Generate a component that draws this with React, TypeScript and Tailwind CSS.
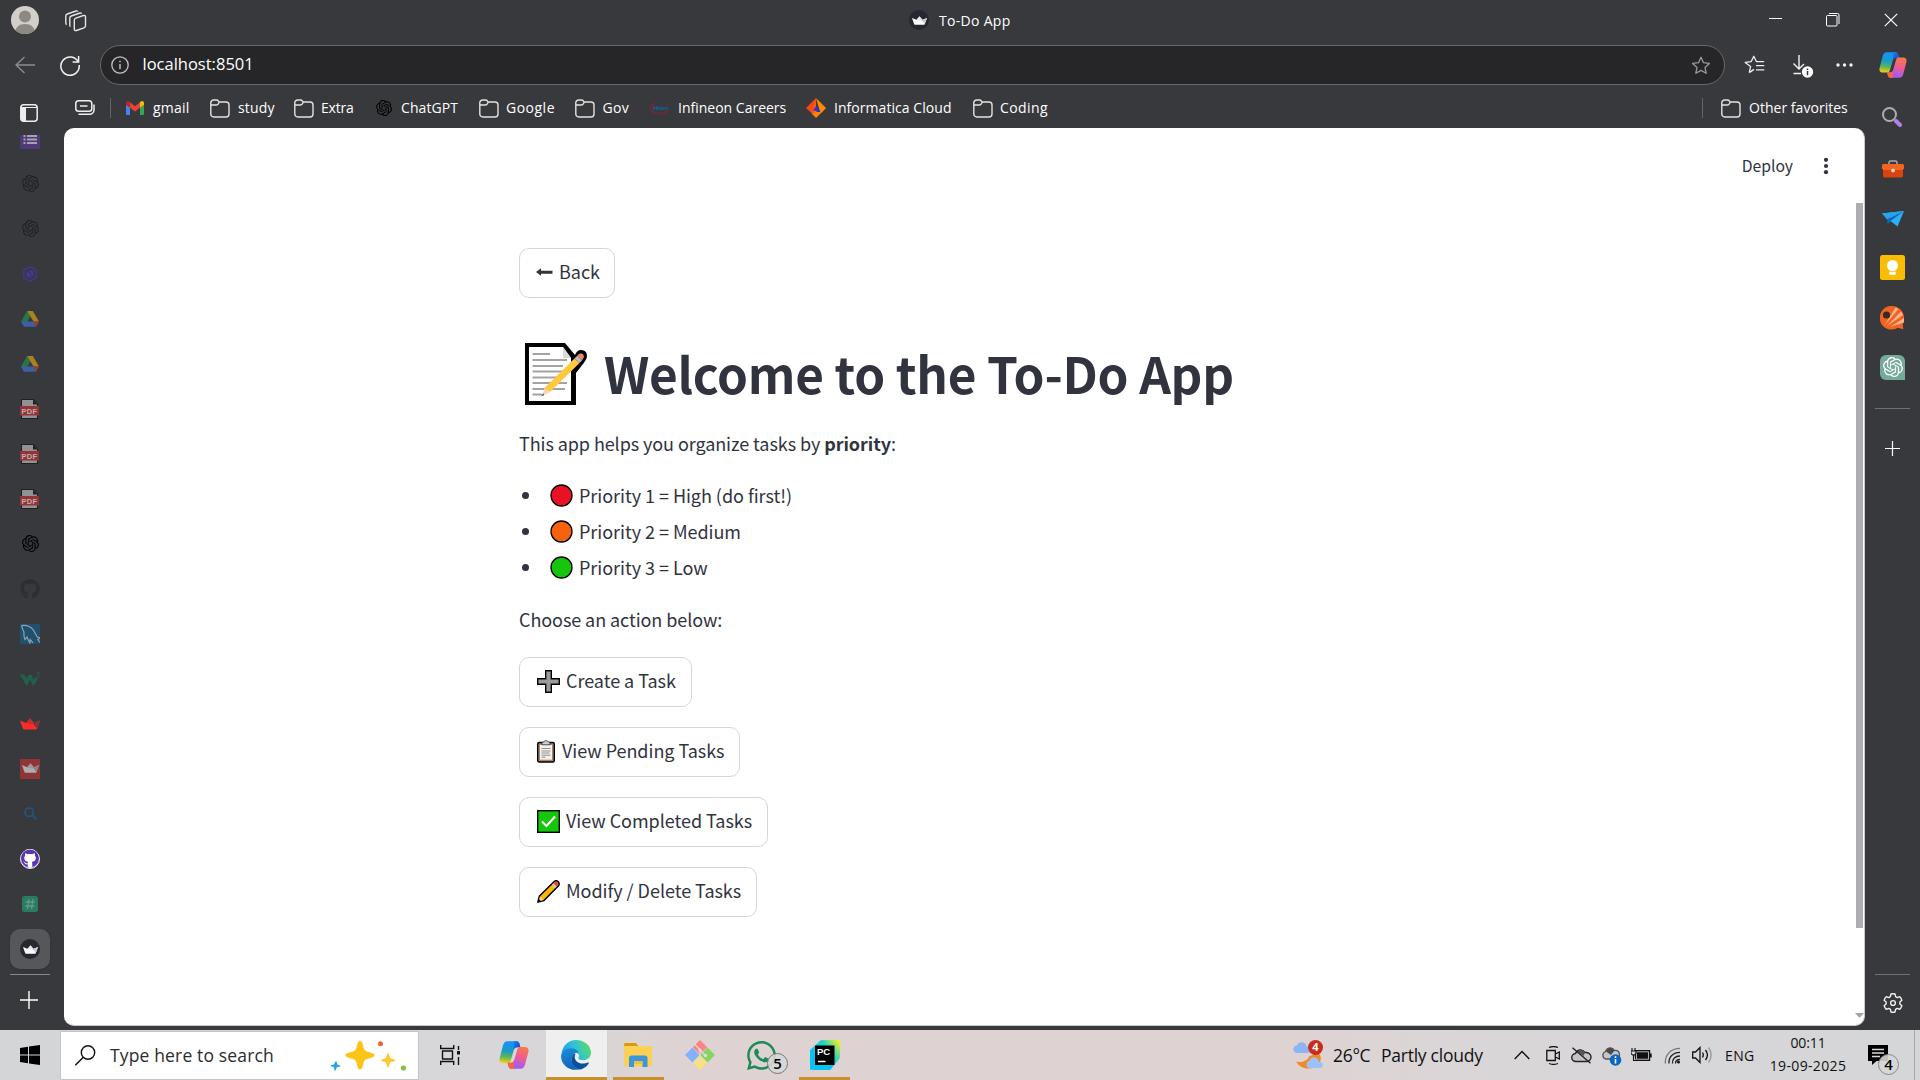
import type { ReactNode } from "react";
import { SiOpenai } from "react-icons/si";
import { FaGithub, FaWhatsapp } from "react-icons/fa";

type SvgProps = { w: number; h: number; vb?: string; className?: string; children: ReactNode };

function Svg({ w, h, vb, className = "", children }: SvgProps) {
  return (
    <svg width={w} height={h} viewBox={vb ?? `0 0 ${w} ${h}`} fill="none" className={`shrink-0 ${className}`}>
      {children}
    </svg>
  );
}

/* ---------- shared glyphs ---------- */

function Folder() {
  return (
    <Svg w={20} h={19}>
      <path d="M.8 4.5A3 3 0 0 1 3.8 1H6.500c1 0 1.500.5 2 1.200L9.300 3H16a3 3 0 0 1 3 3v9a3 3 0 0 1-3 3H3.800a3 3 0 0 1-3-3Z" stroke="#e2e2e2" strokeWidth="1.4" />
      <path d="M.8 6h5.700c1 0 1.500-.5 2-1.300L9.300 3" stroke="#e2e2e2" strokeWidth="1.3" />
    </Svg>
  );
}

function Crown({ size, shade = "#c9c9cf", light = "#ffffff" }: { size: number; shade?: string; light?: string }) {
  return (
    <Svg w={size} h={size * 0.6} vb="0 0 20 12">
      <path d="M0 2.500 6 5 10 .2 14 5l6-2.500-2.700 7.800c-.2.700-.6 1.200-1.400 1.200H4.100c-.8 0-1.200-.5-1.400-1.200Z" fill={light} />
      <path d="m13 5.500 7-3-3 8.200Z" fill={shade} />
      <path d="M6 5.200 10 .2l4 5-1 1.300Z" fill={shade} opacity=".45" />
    </Svg>
  );
}

function CrownBadge() {
  return (
    <span className="flex size-5 items-center justify-center rounded-full bg-[#262730]">
      <Crown size={15} />
    </span>
  );
}

function Copilot({ size, id }: { size: number; id: string }) {
  const d = "M14 2h14c3 0 4.200 2 5 5l1.200 4.500H29c-3 0-4.500 1.500-5.300 4.500l-5 17c-1 3-2 4-5 4H7c-5.500 0-7-4-6-8l5-19c1.200-5 3-8 8-8Z";
  return (
    <Svg w={size} h={size} vb="0 0 48 48">
      <defs>
        <linearGradient id={`${id}a`} x1="0" y1="0" x2="-.1" y2="1">
          <stop offset=".1" stopColor="#1793f0" />
          <stop offset=".4" stopColor="#1a9cc6" />
          <stop offset=".68" stopColor="#5bb659" />
          <stop offset=".95" stopColor="#f6cf10" />
        </linearGradient>
        <linearGradient id={`${id}b`} x1=".5" y1="0" x2=".2" y2="1">
          <stop offset=".1" stopColor="#a75af0" />
          <stop offset=".5" stopColor="#ee5c92" />
          <stop offset="1" stopColor="#fb7a45" />
        </linearGradient>
        <linearGradient id={`${id}c`} x1="0" y1="0" x2="1" y2="1">
          <stop stopColor="#1e86ea" />
          <stop offset="1" stopColor="#1740c4" />
        </linearGradient>
      </defs>
      <path d={d} fill={`url(#${id}a)`} />
      <path d="M22 2h6c3 0 4.200 2 5 5l1.200 4.500H29c-3 0-4.500 1.500-5.300 4.500C24 10 26 3 22 2Z" fill={`url(#${id}c)`} />
      <path d={d} transform="rotate(180 24 24)" fill={`url(#${id}b)`} />
      <path d="M26 46h-6c-3 0-4.200-2-5-5l-1.200-4.500H19c3 0 4.500-1.500 5.300-4.500C24 38 22 45 26 46Z" fill="#f8663c" />
    </Svg>
  );
}

/* ---------- window chrome ---------- */

function TitleBar() {
  return (
    <div className="flex h-10 shrink-0 items-center">
      <span className="ml-[11px] flex size-7 justify-center overflow-hidden rounded-full bg-[#d2cfcb]">
        <Svg w={28} h={28}>
          <circle cx="14" cy="10.500" r="6" fill="#8d8884" />
          <path d="M4 28c0-7 4-10 10-10s10 3 10 10Z" fill="#8d8884" />
        </Svg>
      </span>
      <Svg w={22} h={22} className="ml-[26px] mt-px">
        <g stroke="#e4e4e4" strokeWidth="1.400" strokeLinejoin="round">
          <path d="M9.300 10.200c0-1 .6-1.700 1.500-2l7.600-2.700c1.200-.4 2.100.2 2.100 1.500v8.800c0 1-.6 1.700-1.500 2l-7.600 2.700c-1.200.4-2.100-.2-2.100-1.500Z" />
          <path d="M5.500 16.500c-.6-.2-.7-.8-.7-1.500V8c0-1 .6-1.700 1.500-2L15 3c.7-.2 1.200 0 1.700.6" />
          <path d="M1.700 14.500c-.6-.2-.9-.8-.9-1.500V6c0-1 .6-1.700 1.500-2L11 1c.7-.2 1.400 0 1.800.6" />
        </g>
      </Svg>
      <span className="ml-[822px]"><CrownBadge /></span>
      <span className="ml-[10px] w-[830px] text-[14px] tracking-[0.3px] text-white">To-Do App</span>
      <Svg w={14} h={14}>
        <path d="M0 5.500h13" stroke="#fff" />
      </Svg>
      <Svg w={14} h={14} className="ml-[43px]">
        <rect x=".5" y="2.500" width="10.500" height="10.500" rx="1" stroke="#fff" />
        <path d="M3 .5h8.500a1.500 1.500 0 0 1 1.500 1.500v9" stroke="#fff" />
      </Svg>
      <Svg w={14} h={14} className="ml-[44px]">
        <path d="m.8.8 12.400 12.400M13.200.8.8 13.200" stroke="#fff" strokeWidth="1.200" />
      </Svg>
    </div>
  );
}

function AddressRow() {
  return (
    <div className="flex h-[50px] shrink-0 items-center">
      <Svg w={20} h={18} className="ml-[15px]">
        <path d="M20 9H1M9.500 1 1 9l8.500 8" stroke="#8b8c8e" strokeWidth="1.400" />
      </Svg>
      <Svg w={22} h={22} className="ml-6">
        <path d="M19.300 8A9.200 9.200 0 1 0 20.200 11" stroke="#f1f1f1" strokeWidth="1.500" />
        <path d="M19.600 2v6h-6" stroke="#f1f1f1" strokeWidth="1.500" />
      </Svg>
      <div className="ml-[19px] flex h-10 w-[1625px] items-center rounded-full border border-[#68686a] bg-[#262628]">
        <Svg w={18} h={18} className="ml-[10px]">
          <circle cx="9" cy="9" r="8.200" stroke="#c4c4c4" strokeWidth="1.300" />
          <path d="M9 8v5M9 4.800v1.500" stroke="#c4c4c4" strokeWidth="1.400" />
        </Svg>
        <span className="ml-[13.5px] pb-px text-[16.5px] text-white">localhost:8501</span>
        <Svg w={20} h={19} className="ml-auto mr-[13px]">
          <path d="m10 1.300 2.500 5.400 5.900.7-4.400 4 1.200 5.900L10 14.400l-5.200 2.900L6 11.400l-4.400-4 5.900-.7Z" stroke="#9a9a9b" strokeWidth="1.300" strokeLinejoin="round" />
        </Svg>
      </div>
      <Svg w={22} h={20} className="ml-[19px]">
        <path d="M5.300 17.600 6.600 11.400 1.200 7.400l5.900-.7L9.800 1.300l2.700 5.400h7.700M10 14.400 5.300 17.600M12 10.700h8.300M12 14.800h8.300" stroke="#eee" strokeWidth="1.300" strokeLinejoin="round" />
      </Svg>
      <Svg w={22} h={25} className="ml-[26px] mt-[3px]">
        <path d="M7 1v14M1.500 9.500 7 15l5-5M1.500 19.500H9" stroke="#f3f3f3" strokeWidth="1.400" />
        <circle cx="15.500" cy="18" r="5.700" fill="#fff" />
        <path d="M15.500 17v4.200M15.500 14.500v1.500" stroke="#38393c" strokeWidth="1.500" />
      </Svg>
      <Svg w={18} h={4} className="ml-[22px]">
        <g fill="#f1f1f1">
          <circle cx="2" cy="2" r="1.700" />
          <circle cx="8.500" cy="2" r="1.700" />
          <circle cx="15" cy="2" r="1.700" />
        </g>
      </Svg>
      <span className="ml-[25px]"><Copilot size={28} id="ct" /></span>
    </div>
  );
}

function Bookmark({ icon, label, className }: { icon: ReactNode; label: string; className: string }) {
  return (
    <div className={`flex shrink-0 items-center whitespace-nowrap ${className}`}>
      {icon}
      <span className="-mt-0.5 text-[14px] text-white">{label}</span>
    </div>
  );
}

function BookmarksBar() {
  return (
    <div className="flex h-[38px] shrink-0 items-center pb-0.5">
      <Svg w={20} h={16} className="ml-[11px]">
        <rect x=".8" y=".8" width="16" height="10.500" rx="2.800" stroke="#eee" strokeWidth="1.500" />
        <path d="M5 6h7.500" stroke="#eee" strokeWidth="1.500" />
        <path d="M3.500 14.200h11a4.500 4.500 0 0 0 4.500-4.500V4.500" stroke="#eee" strokeWidth="1.500" />
      </Svg>
      <span className="mx-[15px] h-5 w-px bg-[#626365]" />
      <Bookmark className="w-[84px] gap-[9px] tracking-[0.2px]" label="gmail" icon={
        <Svg w={18} h={14}>
          <path d="M0 3.500V12.700c0 .7.600 1.300 1.300 1.300H4V6.500Z" fill="#4285f4" />
          <path d="M18 3.500v9.200c0 .7-.6 1.300-1.300 1.300H14V6.500Z" fill="#34a853" />
          <path d="M4 1.300 9 5.200l5-3.900v5.400L9 10.500 4 6.700Z" fill="#ea4335" />
          <path d="M0 2C0 .2 1.900-.6 3.200.6L4 1.300v5.400L0 3.700Z" fill="#c5221f" />
          <path d="M18 2c0-1.800-1.900-2.600-3.200-1.400l-.8.700v5.400l4-3Z" fill="#fbbc04" />
        </Svg>
      } />
      <Bookmark className="w-[84px] gap-2 tracking-[0.2px]" label="study" icon={<Folder />} />
      <Bookmark className="w-[82px] gap-[7px] tracking-[-0.2px]" label="Extra" icon={<Folder />} />
      <Bookmark className="w-[103px] gap-[9px] tracking-[0.1px]" label="ChatGPT" icon={<SiOpenai className="size-4 text-black" />} />
      <Bookmark className="w-[96px] gap-[7px] tracking-[0.5px]" label="Google" icon={<Folder />} />
      <Bookmark className="w-[75px] gap-[7.5px] tracking-[0.3px]" label="Gov" icon={<Folder />} />
      <Bookmark className="w-[156px] gap-2" label="Infineon Careers" icon={
        <Svg w={20} h={12}>
          <path d="M6 1.500C2 2.500.5 4.500.7 6.500 1 9.500 5 11.300 10 11.300c4 0 6.500-1 8-2.300" stroke="#8c1f3a" strokeWidth="1.100" />
          <text x="3" y="8.300" textLength="16" fontFamily="Liberation Sans" fontWeight="700" fontSize="6" fill="#175c93">Infineon</text>
        </Svg>
      } />
      <Bookmark className="w-[167px] gap-2 tracking-[0.05px]" label="Informatica Cloud" icon={
        <Svg w={20} h={20}>
          <path d="M10 0 0 10l6.500 6Z" fill="#f04b12" />
          <path d="m10 0 10 10-5.500 5.500Z" fill="#ff8a00" />
          <path d="M10 0 5.500 15.500 10 14Z" fill="#ff5a10" />
          <path d="M10 8v5.500h4.500Z" fill="#2431e8" />
          <path d="m10 7 .5 7h4l5.500-4-10 10-4-4 4-3Z" fill="#ff8200" />
          <path d="M10 8.500 7 12.500l7 .5Z" fill="#2431e8" />
        </Svg>
      } />
      <Bookmark className="gap-[7px] tracking-[0.4px]" label="Coding" icon={<Folder />} />
      <span className="ml-auto mr-[18px] h-5 w-px bg-[#626365]" />
      <Bookmark className="w-[144px] gap-2 tracking-[0.03px]" label="Other favorites" icon={<Folder />} />
    </div>
  );
}

/* ---------- vertical tabs ---------- */

function Drive() {
  return (
    <Svg w={18} h={16} className="opacity-60">
      <path d="M6 0h3l1.800 3L3.500 15.500 0 10.500Z" fill="#1f9d50" />
      <path d="M6.200 0h5.600L18 10.500h-5.500Z" fill="#f5b70a" />
      <path d="M0 10.500h4L6 0 9 5 5.500 10.800Z" fill="#28994f" />
      <path d="M3.200 10.500h9.300l2.500 5.300H3L0 10.500Z" fill="#3f7be8" />
      <path d="M12.500 10.500H18l-3 5.300Z" fill="#e04434" />
    </Svg>
  );
}

function Pdf() {
  return (
    <Svg w={20} h={20} className="mr-[1px]">
      <path d="M1.500.5h12L17.500 5v14.500h-16Z" fill="#929294" stroke="#1f2022" strokeWidth="1.100" />
      <path d="M13 .5v5h4.500Z" fill="#1f2022" />
      <rect y="7" width="19" height="9.500" fill="#953437" />
      <text x="9.500" y="14.500" textAnchor="middle" fontFamily="Liberation Sans" fontWeight="700" fontSize="7.500" letterSpacing=".3" fill="#b9b1b2">PDF</text>
    </Svg>
  );
}

function Tab({ children }: { children: ReactNode }) {
  return <div className="flex h-[45px] w-full shrink-0 items-center justify-center">{children}</div>;
}

function VerticalTabs() {
  return (
    <div className="flex w-16 shrink-0 flex-col pr-1">
      <div className="flex h-[45px] shrink-0 justify-center pt-[14px] pr-1">
        <Svg w={18} h={18} className="ml-[2px]">
          <rect x=".8" y=".8" width="16.400" height="16.400" rx="3" stroke="#eee" strokeWidth="1.500" />
          <path d="M1 4h4.500v13H3.500A2.500 2.500 0 0 1 1 14.500ZM1 3.500h16" fill="#eee" stroke="#eee" strokeWidth="1" />
        </Svg>
      </div>
      <div className="flex h-[26px] shrink-0 justify-center">
        <Svg w={20} h={14}>
          <rect width="20" height="14" fill="#4e3a74" />
          <path d="M3.500 1h2M7 1h10M3.500 4.500h2M7 4.500h10M3.500 8h2M7 8h10" stroke="#a7a1b3" strokeWidth="1.800" />
        </Svg>
      </div>
      <Tab><SiOpenai className="size-[17px] text-[#202124]" /></Tab>
      <Tab><SiOpenai className="size-[17px] text-[#202124]" /></Tab>
      <Tab>
        <Svg w={14} h={16}>
          <path d="m7 .8 6.200 3.400v7.600L7 15.200.8 11.800V4.200Z" stroke="#40389c" strokeWidth="1.300" />
          <path d="M3.500 5.500 7 7.300V12l-3.500-1.800ZM5 4.700l2-1 3.500 1.500v4L8 11.500V7Z" fill="#40389c" />
        </Svg>
      </Tab>
      <Tab><Drive /></Tab>
      <Tab><Drive /></Tab>
      <Tab><Pdf /></Tab>
      <Tab><Pdf /></Tab>
      <Tab><Pdf /></Tab>
      <Tab><SiOpenai className="size-[17px] text-black" /></Tab>
      <Tab><FaGithub className="size-5 text-[#2d2e32]" /></Tab>
      <Tab>
        <Svg w={20} h={20}>
          <rect width="20" height="20" rx="1" fill="#1f506e" />
          <path d="M1.500 1.500c5-.8 9 1 11.500 4.200 2 2.500 3 5.500 4.300 7.300L20 14l-2.200 1.500 2.200 3M1.500 1.500C2.500 4 2.300 5.500 4 8c-.3 3-.3 4.500 1 7.500L7 13c.7 2.500 1.700 4 3 6l.3-3.500 2.700 3.500" stroke="#93a2ad" strokeWidth="1.200" />
        </Svg>
      </Tab>
      <Tab>
        <Svg w={20} h={14}>
          <path d="M0 2.500h4.500l2 4 2-3.500h3l2 4.500 2-2.500 2 2.500-4 6.500-3.500-6-3.300 6Z" fill="#235f4c" />
          <path d="M16.500.7h2.800L17.800 2.500c2 0 2 3-.2 3-.7 0-1-.2-1.300-.6" stroke="#235f4c" strokeWidth="1" />
        </Svg>
      </Tab>
      <Tab><Crown size={20} light="#ff2b2b" shade="#7d353b" /></Tab>
      <Tab>
        <span className="flex size-5 items-center justify-center bg-[#8f3437]"><Crown size={17} light="#adadaf" shade="#8c7f82" /></span>
      </Tab>
      <Tab>
        <Svg w={13} h={13}>
          <circle cx="5.200" cy="5.200" r="4.200" stroke="#20588a" strokeWidth="1.500" />
          <path d="m8.300 8.300 4 4" stroke="#20588a" strokeWidth="1.500" />
        </Svg>
      </Tab>
      <Tab>
        <span className="flex size-5 items-center justify-center rounded-full border border-[#efeaf8] bg-[#5a35ad]">
          <FaGithub className="size-[19px] rounded-full bg-white text-[#5a35ad]" />
        </span>
      </Tab>
      <Tab>
        <Svg w={16} h={16}>
          <rect width="16" height="16" rx="2.500" fill="#2b7a61" />
          <path d="M3.500 6h9.500M3 10h9.500M7 3 5.500 13M11 3 9.500 13" stroke="#5d9c88" strokeWidth="1.300" />
        </Svg>
      </Tab>
      <div className="ml-[10px] mt-[3px] flex size-10 shrink-0 items-center justify-center rounded-[10px] bg-[#56575b] shadow">
        <CrownBadge />
      </div>
      <span className="ml-[10px] mt-[5px] h-px w-10 shrink-0 bg-[#87888a]" />
      <Svg w={18} h={18} className="ml-5 mt-4">
        <path d="M9 0v18M0 9h18" stroke="#fff" strokeWidth="1.400" />
      </Svg>
    </div>
  );
}

/* ---------- edge sidebar ---------- */

function SideSlot({ children, className = "h-[50px]" }: { children: ReactNode; className?: string }) {
  return <div className={`flex shrink-0 items-center justify-center ${className}`}>{children}</div>;
}

function Sidebar() {
  return (
    <div className="flex w-[55px] shrink-0 flex-col">
      <SideSlot className="h-[54px] pr-0.5">
        <Svg w={20} h={20}>
          <circle cx="7.500" cy="7.500" r="6.500" stroke="#adadad" strokeWidth="2" />
          <path d="m14 14 4 4" stroke="#b27ef2" strokeWidth="4" strokeLinecap="round" />
        </Svg>
      </SideSlot>
      <SideSlot>
        <Svg w={22} h={18}>
          <path d="M7 5V2.500A1.500 1.500 0 0 1 8.500 1h5A1.500 1.500 0 0 1 15 2.500V5" stroke="#a9a9a9" strokeWidth="1.500" />
          <rect x="1" y="8" width="20" height="9.500" rx="1.500" fill="#d8430f" />
          <path d="M0 5.500C0 4.700.7 4 1.500 4h19c.8 0 1.500.7 1.500 1.500v3L20.500 10h-19L0 8.500Z" fill="#f4641f" />
          <circle cx="11" cy="10.500" r="2" fill="#cfcfcf" />
        </Svg>
      </SideSlot>
      <SideSlot className="h-12 pt-px">
        <Svg w={22} h={16}>
          <path d="M0 2.500 22 0 10 9Z" fill="#3cc4fa" />
          <path d="M0 2.500 22 0 5 8.500Z" fill="#23a4ee" />
          <path d="m5 8.500 17-8.500L9 10.500 5.500 13Z" fill="#0d66b7" />
          <path d="m8.500 10 13.500-10-6.500 15.500Z" fill="#2eaef3" />
        </Svg>
      </SideSlot>
      <SideSlot>
        <Svg w={25} h={25}>
          <rect width="25" height="25" rx="2.500" fill="#fbbc04" />
          <circle cx="12.500" cy="10.500" r="5.500" fill="#fff" />
          <path d="M9.300 12h6.400v3.500H9.300ZM9.300 16.800h6.400v3H9.300Z" fill="#fff" />
        </Svg>
      </SideSlot>
      <SideSlot className="h-[50px] pt-0.5">
        <Svg w={25} h={24}>
          <path d="M12.500 0a12 12 0 0 1 10.300 17.500l.4 5.700-5.500-1.400A11.800 11.800 0 1 1 12.500 0Z" fill="#f26322" />
          <path d="M4.500 19.500 15.500 1.500l3 1.500ZM6.500 20.500 21 5.500l2 3.500ZM10 21l14-9v4.500Z" fill="#fbb48a" />
          <circle cx="6.500" cy="9" r="3.600" fill="#3a2a25" />
        </Svg>
      </SideSlot>
      <SideSlot>
        <span className="flex size-[25px] items-center justify-center rounded-[6px] rounded-br-none bg-[#74a99b]">
          <SiOpenai className="size-5 text-white" />
        </span>
      </SideSlot>
      <span className="ml-[10px] mt-[16px] h-px w-[35px] shrink-0 bg-[#707173]" />
      <Svg w={15} h={15} className="ml-5 mt-8">
        <path d="M7.500 0v15M0 7.500h15" stroke="#fff" strokeWidth="1.200" />
      </Svg>
      <span className="mb-[17px] ml-[10px] mt-auto h-px w-[35px] shrink-0 bg-[#707173]" />
      <Svg w={22} h={22} vb="0 0 24 24" className="mb-[16px] ml-[17px]">
        <path d="M9.700 2.200a10 10 0 0 1 4.600 0l.5 2.900 1.800 1 2.800-1a10 10 0 0 1 2.300 4L19.500 11v2l2.200 1.900a10 10 0 0 1-2.300 4l-2.800-1-1.800 1-.5 2.900a10 10 0 0 1-4.600 0l-.5-2.900-1.800-1-2.800 1a10 10 0 0 1-2.300-4L4.500 13v-2L2.300 9.100a10 10 0 0 1 2.300-4l2.800 1 1.800-1Z" stroke="#f1f1f1" strokeWidth="1.500" strokeLinejoin="round" />
        <circle cx="12" cy="12" r="2.600" stroke="#f1f1f1" strokeWidth="1.500" />
      </Svg>
    </div>
  );
}

/* ---------- page ---------- */

function Memo() {
  return (
    <Svg w={63} h={63} className="mt-[4px]">
      <path d="M0 0h40l10 12c1-3 3-5 6-5 5 0 7 4 5.500 8.500-1 3-8 11-10.500 14.500V62H0Z" fill="#000" />
      <path d="M4 4h34l8 11v43H4Z" fill="#fff" />
      <path d="M38 4v11h8Z" fill="#dadada" />
      <g stroke="#a3a3a3" strokeWidth="2">
        <path d="M7.500 11H25M7.500 17H42M7.500 23H38M7.500 28.500H42M7.500 34.500H38M7.500 40H42M7.500 46H40M7.500 51.500H17" />
      </g>
      <path d="m49.500 15.500 5 4.500-29.500 29-5.500-4Z" fill="#ffc83d" />
      <path d="m19.500 45 5.500 4-8 4Z" fill="#f5d3b5" />
      <path d="m18.200 50.500 1 1.500-3 1.500Z" fill="#3c3c3c" />
      <path d="m49.500 15.500 2.700-2.800 5 4.500L54.500 20Z" fill="#bdbdbd" />
      <path d="m52.200 12.700 1.800-1.600c2.800-2 6 1 4.500 4l-1.300 2.100Z" fill="#ee8377" />
    </Svg>
  );
}

function Clipboard() {
  return (
    <Svg w={18} h={23}>
      <rect x=".7" y="2.500" width="16.600" height="19.500" rx="1.500" fill="#a98467" stroke="#000" strokeWidth="1.400" />
      <rect x="3" y="5" width="12" height="14.700" fill="#f2f2f2" />
      <path d="M5 4.800V2.500C6.500 2.500 7 .7 9 .7s2.500 1.800 4 1.800v2.300Z" fill="#cfcfcf" stroke="#333" strokeWidth=".8" />
      <path d="M4.500 8.500h9M4.500 11h9M4.500 13h8M4.500 15.200h9M4.500 17.200h4" stroke="#8f8f8f" strokeWidth="1" />
    </Svg>
  );
}

function ActionButton({ icon, label, className }: { icon: ReactNode; label: string; className: string }) {
  return (
    <button className={`flex h-[50px] items-center whitespace-nowrap rounded-[10px] border border-[#d6d6d9] bg-white pb-0.5 text-[18px] ${className}`}>
      {icon}
      <span className="-mt-px">{label}</span>
    </button>
  );
}

const priorities = [
  { color: "#e81224", label: "Priority 1 = High (do first!)" },
  { color: "#f7630c", label: "Priority 2 = Medium" },
  { color: "#16c60c", label: "Priority 3 = Low" },
];

function Page() {
  return (
    <div className="flex h-[898px] overflow-hidden rounded-[10px] border-b border-r border-[#c9c9ca] bg-white font-['Noto_Sans_CJK_SC',sans-serif] tracking-[-0.04px] text-[#31333f]">
      <main className="flex grow flex-col">
        <div className="flex h-[76px] items-center justify-end">
          <span className="text-[15.75px]">Deploy</span>
          <Svg w={6} h={18} className="ml-[30px] mr-[26px] -mt-px">
            <g fill="#31333f">
              <circle cx="3" cy="2.800" r="2.100" />
              <circle cx="3" cy="9" r="2.100" />
              <circle cx="3" cy="15.200" r="2.100" />
            </g>
          </Svg>
        </div>
        <div className="ml-[455px] mt-[44px] flex flex-col items-start">
          <ActionButton className="w-24 gap-[6px] pl-4" label="Back" icon={
            <Svg w={17} h={8}>
              <path d="M0 4 5 .3v2.500h11.500v2.900H5v2Z" fill="#31333f" />
            </Svg>
          } />
          <h1 className="mt-[42px] flex h-16 items-center gap-[16px] whitespace-nowrap pl-[6px] text-[49.5px] font-bold leading-[64px] tracking-[-0.3px]">
            <Memo />
            <span className="pt-0.5">Welcome to the To-Do App</span>
          </h1>
          <p className="mt-[21px] text-[18px] leading-9 tracking-[-0.08px]">This app helps you organize tasks by <b>priority</b>:</p>
          <ul className="mt-4">
            {priorities.map((p) => (
              <li key={p.label} className="flex h-9 items-center text-[18px]">
                <span className="ml-[3px] mt-px size-[7px] rounded-full bg-[#31333f]" />
                <Svg w={23} h={23} className="ml-[21px] mt-px">
                  <circle cx="11.500" cy="11.500" r="10.500" fill={p.color} stroke="#000" strokeWidth="1.300" />
                </Svg>
                <span className="ml-1.5 mt-px">{p.label}</span>
              </li>
            ))}
          </ul>
          <p className="mt-4 text-[18px] leading-9 tracking-[-0.08px]">Choose an action below:</p>
          <div className="mt-5 flex flex-col items-start gap-5">
            <ActionButton className="w-[173px] gap-[6px] pl-[17px]" label="Create a Task" icon={
              <Svg w={23} h={23}>
                <path d="M8.700.7h5.600v8h8v5.600h-8v8H8.700v-8h-8V8.700h8Z" fill="#9a9a9a" stroke="#000" strokeWidth="1.400" />
              </Svg>
            } />
            <ActionButton className="w-[221px] gap-[7px] pl-[17px]" label="View Pending Tasks" icon={<Clipboard />} />
            <ActionButton className="w-[249px] gap-[6px] pl-[17px]" label="View Completed Tasks" icon={
              <Svg w={23} h={23}>
                <rect x=".7" y=".7" width="21.600" height="21.600" fill="#16c60c" stroke="#000" strokeWidth="1.400" />
                <path d="m5 11.500 4.500 4.500L18 6.500" stroke="#fff" strokeWidth="2" />
              </Svg>
            } />
            <ActionButton className="w-[238px] gap-[6px] pl-[17px]" label="Modify / Delete Tasks" icon={
              <Svg w={23} h={23}>
                <path d="M.9 22.100 2.500 16 17 1.800c1.200-1.200 3-1.200 4.200 0s1.200 3 0 4.200L7 20.500Z" fill="#ffb900" stroke="#000" strokeWidth="1.600" strokeLinejoin="round" />
                <path d="m17.500 2.300 3.200 3.200M2.900 16.500l3.600 3.600-4.800 1.300Z" fill="#f4cfa8" />
                <path d="m14.800 4.900 1.600-1.600 3.300 3.300-1.600 1.600Z" fill="#c9c9c9" />
                <path d="M16.400 3.300 17.600 2.200c1-.8 2.200-.7 3 .2.900.8.900 2 .1 3L19.700 6.600Z" fill="#e74856" />
                <path d="M.9 22.100 1.800 19l2.200 2.200Z" fill="#000" />
              </Svg>
            } />
          </div>
        </div>
      </main>
      <div className="flex w-[9px] shrink-0 flex-col pt-[75px]">
        <span className="ml-px h-[725px] w-[7px] bg-[#aeadb1]" />
        <Svg w={9} h={5} className="mb-[7px] mt-auto">
          <path d="M0 0h9L4.500 5Z" fill="#a5a5a8" />
        </Svg>
      </div>
    </div>
  );
}

/* ---------- taskbar ---------- */

function EdgeLogo() {
  return (
    <Svg w={30} h={30} vb="0 0 32 32" className="mr-px">
      <defs>
        <linearGradient id="edA" x1="0" y1=".6" x2="1" y2=".3">
          <stop stopColor="#1f9de0" />
          <stop offset=".5" stopColor="#2fc3d6" />
          <stop offset="1" stopColor="#5bdd5a" />
        </linearGradient>
        <linearGradient id="edB" x1="0" y1="0" x2=".3" y2="1">
          <stop stopColor="#1a8fdc" />
          <stop offset="1" stopColor="#1266bd" />
        </linearGradient>
      </defs>
      <path d="M.5 15C1.300 6.500 8 0 16 0c9 0 16 6 16 13.500 0 5-3.800 8-8.300 8-4 0-5.700-1.500-5.200-2.700 1.500-2 1.500-8.300-6-8.800C6.500 9.700 2 12 .5 15Z" fill="url(#edA)" />
      <path d="M0 17c.8-5.500 5.500-8.500 11-8.300 5.800.3 8.300 3.800 8 7.300-.2-1.500-1.500-2.700-3-2.500-3.500 1.500-5 5-4.500 8.500.5 4.500 4.500 8.500 8.500 9.300C9 34 0 26.500 0 17Z" fill="url(#edB)" />
      <path d="M13 15.500c-4 6-.5 13.500 5 15.500 2 .7 4 .3 5.500-.6 2.500-1.200 4.600-3.200 6-5.400.5-.8 0-1.300-.7-1-4.500 2-10 1.200-12.800-2-1.700-2-2-4.800-.5-7-1 0-1.800 0-2.500.5Z" fill="#0c4f9c" />
    </Svg>
  );
}

function Underlined({ children, className }: { children: ReactNode; className: string }) {
  return <div className={`flex h-full shrink-0 items-center justify-center border-b-[3px] border-[#c98f2c] pt-[3px] ${className}`}>{children}</div>;
}

function Taskbar() {
  return (
    <div className="flex h-[50px] shrink-0 items-center bg-[linear-gradient(90deg,#d4d5d7_0%,#d8d6d8_28%,#dfd2d2_38%,#dfd2d2_66%,#d9d6d8_78%,#d5d6d8_100%)] text-[#111]">
      <Svg w={20} h={20} className="ml-5">
        <path d="M0 2.900 8 1.700v7.700H0ZM9 1.500 20 0v9.400H9ZM0 10.400h8v7.800l-8-1.100ZM9 10.400h11V20L9 18.400Z" fill="#000" />
      </Svg>
      <div className="ml-5 mt-px flex h-[49px] w-[359px] items-center border border-[#c5c5c6] bg-white">
        <Svg w={21} h={21} className="ml-[14px]">
          <circle cx="13" cy="7.500" r="6.700" stroke="#111" strokeWidth="1.400" />
          <path d="m8.300 12.300-8 8" stroke="#111" strokeWidth="1.400" />
        </Svg>
        <span className="ml-[14px] text-[17.5px] tracking-[0.15px] text-[#2c2c2c]">Type here to search</span>
        <Svg w={77} h={30} className="ml-auto mr-[11px]">
          <path d="M30 0c2 0 2.500 2 3.300 5.500.8 3.800 1.700 4.700 5.500 5.500C42 11.900 44.500 12.500 44.500 14.300s-2.500 2.400-5.700 3.200c-3.800.8-4.700 1.700-5.500 5.500C32.500 26.500 32 28.500 30 28.500s-2.500-2-3.300-5.500c-.8-3.800-1.700-4.700-5.500-5.500-3.200-.8-5.700-1.400-5.700-3.200s2.500-2.400 5.700-3.300c3.800-.8 4.700-1.700 5.500-5.500C27.500 2 28 0 30 0Z" fill="#fcc419" />
          <path d="M58 12c1.200 0 1.300 4 2.300 5s5 1 5 2.200-4 1.200-5 2.200-1.100 5-2.300 5-1.300-4-2.300-5-4.500-1-4.500-2.200 3.500-1.200 4.500-2.200 1.100-5 2.300-5Z" fill="#fcc931" />
          <path d="M6 20c1 0 .8 2.800 1.500 3.500s3 .8 2.800 1.800-2.500.4-3.300 1-1 3.400-2 3.400-.5-2.600-1.200-3.400S.5 25.500.6 24.500s2.500-.3 3.300-1S5 20 6 20Z" fill="#1da9e8" />
          <circle cx="50.500" cy="2.700" r="2.500" fill="#f0642c" />
          <circle cx="73.500" cy="27" r="2.600" fill="#80c342" />
        </Svg>
      </div>
      <div className="flex w-[61px] justify-center">
        <Svg w={20} h={20}>
          <path d="M.7 0v3.500h13V0M.7 20v-3.500h13V20M2.500 6v8M12.500 6v8M2 6h11M2 14h11M18.500 1v4M18.500 12v8" stroke="#111" strokeWidth="1.400" />
          <path d="M17 6h3v3.500h-3Z" fill="#111" />
        </Svg>
      </div>
      <div className="flex w-[66px] pl-[19px]"><Copilot size={30} id="cb" /></div>
      <Underlined className="w-[61px] bg-[#efefef]"><EdgeLogo /></Underlined>
      <Underlined className="ml-1.5 w-[51px]">
        <Svg w={28} h={24} className="mr-0.5">
          <path d="M0 1.500C0 .7.700 0 1.500 0H12l3 4H0Z" fill="#dc9a08" />
          <path d="M0 3h26.500c.8 0 1.500.7 1.500 1.500V22c0 .8-.7 1.500-1.500 1.500h-25C.7 23.500 0 22.800 0 22Z" fill="#fccf55" />
          <path d="M5 24v-9c0-1.500 1-2.500 2.500-2.500H21c1.500 0 2.500 1 2.500 2.500v9h-5v-6H10v6Z" fill="#3b96dc" />
          <path d="M10 18h8.500v3H10Z" fill="#f1bd3e" />
        </Svg>
      </Underlined>
      <div className="ml-[10px] flex w-[51px] justify-center">
        <Svg w={30} h={30}>
          <path d="m15 0 7.200 7.200-7.200 7.200-7.200-7.200Z" fill="#fb8486" />
          <path d="m7.400 7.600 7.200 7.400-7.200 7.400L0 15Z" fill="#84b1fb" />
          <path d="m22.600 7.600 7.400 7.400-7.400 7.400-7.200-7.400Z" fill="#8ad35d" />
          <path d="m15 15.600 7.200 7.200L15 30l-7.200-7.200Z" fill="#fde07b" />
          <path d="m9.500 4 5.500 6M15 10v11M15.500 10.500l4.500 4.500" stroke="#dedcdd" strokeWidth="1.200" />
          <circle cx="15" cy="10.200" r="1.600" fill="#dedcdd" />
          <circle cx="15" cy="21" r="1.800" fill="#dedcdd" />
          <circle cx="20.500" cy="15.500" r="1.800" fill="#dedcdd" />
        </Svg>
      </div>
      <div className="relative ml-[11px] flex w-[51px] justify-center">
        <FaWhatsapp className="size-[33px] text-[#1b8a54]" />
        <span className="absolute left-[31px] top-[14px] flex size-[21px] items-center justify-center rounded-full border border-[#777] bg-[#d8d8d8]/90 text-[15px] font-semibold text-black">5</span>
      </div>
      <Underlined className="ml-3 w-[51px]">
        <Svg w={30} h={30}>
          <defs>
            <linearGradient id="pc" x1=".3" y1=".6" x2="1" y2=".05">
              <stop stopColor="#0ec8f4" />
              <stop offset=".45" stopColor="#21cfc9" />
              <stop offset="1" stopColor="#f6f01a" />
            </linearGradient>
          </defs>
          <path d="M0 10 11 0h19v18L20 30H2a2 2 0 0 1-2-2Z" fill="url(#pc)" />
          <path d="M0 17v11c0 1 1 2 2 2h18l5-6H5V10H0Z" fill="#07c3f2" />
          <rect x="5" y="5.500" width="19.500" height="19.500" fill="#000" />
          <text x="7" y="14.500" fontFamily="Liberation Sans" fontWeight="700" fontSize="9.500" fill="#fff">PC</text>
          <path d="M8 21.500h7.500" stroke="#fff" strokeWidth="1.500" />
        </Svg>
      </Underlined>
      <div className="relative ml-[443px] w-10">
        <Svg w={30} h={28}>
          <path d="M16.500 15C20 15 22 12 22 9.500c6 3 8 9 3 14.500-5 5.500-17 5-22-3.500 5 1.500 11 0 13.500-5.500Z" fill="#f08a24" />
          <path d="M3.500 12a3.800 3.800 0 0 1 .3-7.500C5 1.500 8 .5 10.500 1.500c2 .6 3 2.300 3 4 3 0 4 1.800 4 3.300s-1 3.200-3 3.200Z" fill="#8db4f5" />
          <path d="M16 27a3.800 3.800 0 0 1 .3-7.300c1-3 4-4 6.500-3 2 .6 3 2.300 3 4 3 0 4 1.800 4 3.300s-1 3-3 3Z" fill="#9cc0f9" />
        </Svg>
        <span className="absolute left-[15px] top-[-1px] flex size-[15px] items-center justify-center rounded-full bg-[#c92b1e] text-[11px] font-bold text-white">4</span>
      </div>
      <span className="w-[48px] whitespace-nowrap text-[17.5px] tracking-[-0.3px]">26°C</span>
      <span className="w-[133px] whitespace-nowrap text-[17.5px] tracking-[-0.25px]">Partly cloudy</span>
      <Svg w={16} h={10}>
        <path d="m.7 9 7.300-7.500L15.300 9" stroke="#111" strokeWidth="1.400" />
      </Svg>
      <Svg w={15} h={19} className="ml-4">
        <path d="M3 1.500c2.500-1 6.500-1 9 0M3 17.500c2.500 1 6.500 1 9 0M.8 4.500h8.500v10H.8ZM9.300 8l4-2v7l-4-2" stroke="#111" strokeWidth="1.300" />
      </Svg>
      <Svg w={21} h={17} className="ml-[10px]">
        <path d="M5 14.500A4 4 0 0 1 4.500 6.500C6 2.500 11 1.500 14 5.500c4-.3 6 2 6 4.500s-2 4.500-4.500 4.500Z" fill="#c4c4c4" stroke="#222" strokeWidth="1.400" />
        <path d="M6.500 4.500C9 1.500 12.500 2.500 14 5.500L12.500 9Z" fill="#555" />
        <path d="m1.500.8 18 15.400" stroke="#222" strokeWidth="1.400" />
      </Svg>
      <Svg w={21} h={20} className="ml-[9px] mt-0.5">
        <path d="M4.500 13A4 4 0 0 1 4.500 5.500C6 1.500 11 .5 13.500 4.500c4-.3 5 2 5 4.500S17 13 15 13Z" fill="#c6c6c6" stroke="#555" strokeWidth="1.300" />
        <path d="M5 5.500C7 1 12 1 13.500 4.500L10 9Z" fill="#4a4a4a" />
        <circle cx="14.500" cy="14" r="5.800" fill="#0a66c2" />
        <path d="M14.500 13v4.500M14.500 10.300V12" stroke="#fff" strokeWidth="1.600" />
      </Svg>
      <Svg w={21} h={14} className="ml-[9px]">
        <rect x="4.500" y="2.700" width="14" height="9.600" stroke="#111" strokeWidth="1.400" />
        <path d="M6 4.200h11v6.600H6ZM19 5.500h1.700v4H19Z" fill="#111" />
        <path d="M1 0v3M4 0v3M0 3h5v2.500L3.500 7h-2L0 5.500ZM2.500 7v5.500H5" stroke="#111" strokeWidth="1.100" fill="#d8d6d8" />
      </Svg>
      <Svg w={17} h={17} className="ml-[12px]">
        <g stroke="#222" strokeWidth="1.300">
          <path d="M1.300 16.500C.8 7.500 7 1.500 16 1.300" stroke="#777" />
          <path d="M5 16.500C4.500 10 9 5.300 16 5.300M8.500 16.500C8.300 12 11 9 16 9M11.500 16.500C11.500 14 13 12.500 16 12.500" />
        </g>
        <circle cx="14.500" cy="15.200" r="1.400" fill="#111" />
      </Svg>
      <Svg w={21} h={18} className="ml-[11px]">
        <path d="M.7 6H3.500L8 1.500v15L3.500 12H.7Z" stroke="#111" strokeWidth="1.300" />
        <path d="M10.500 6.500c1 1.500 1 3.500 0 5M13.500 4c2.300 3 2.300 7 0 10" stroke="#111" strokeWidth="1.300" />
        <path d="M16.500 1.500c3.500 4.500 3.500 10.500 0 15" stroke="#999" strokeWidth="1.300" />
      </Svg>
      <span className="ml-[12px] w-[40px] text-[14px] tracking-[0.4px]">ENG</span>
      <div className="flex w-[86px] flex-col items-center text-[14px] leading-6">
        <span className="-mt-0.5 h-[23px] tracking-[-0.1px]">00:11</span>
        <span className="h-[23px] tracking-[0.35px]">19-09-2025</span>
      </div>
      <div className="relative ml-[17px] h-[30px] w-[30px]">
        <Svg w={20} h={20} className="mt-[5px]">
          <path d="M0 0h20v16H8.500L4 20v-4H0Z" fill="#000" />
          <path d="M4 4.500h12M4 8h12M4 11.500h8" stroke="#d9d9d9" strokeWidth="1.400" />
        </Svg>
        <span className="absolute left-[10px] top-[14px] flex size-[21px] items-center justify-center rounded-full border border-[#888] bg-[#d6d6d7]/90 text-[15px] font-semibold text-black">4</span>
      </div>
      <span className="ml-auto mr-[5px] h-full w-px bg-[#a9a9ab]" />
    </div>
  );
}

export default function App() {
  return (
    <div className="flex h-[1080px] w-[1920px] flex-col overflow-hidden bg-[#38393c] font-['Open_Sans',sans-serif]">
      <TitleBar />
      <AddressRow />
      <div className="flex h-[940px] shrink-0">
        <VerticalTabs />
        <div className="flex w-[1801px] shrink-0 flex-col">
          <BookmarksBar />
          <Page />
        </div>
        <Sidebar />
      </div>
      <Taskbar />
    </div>
  );
}
